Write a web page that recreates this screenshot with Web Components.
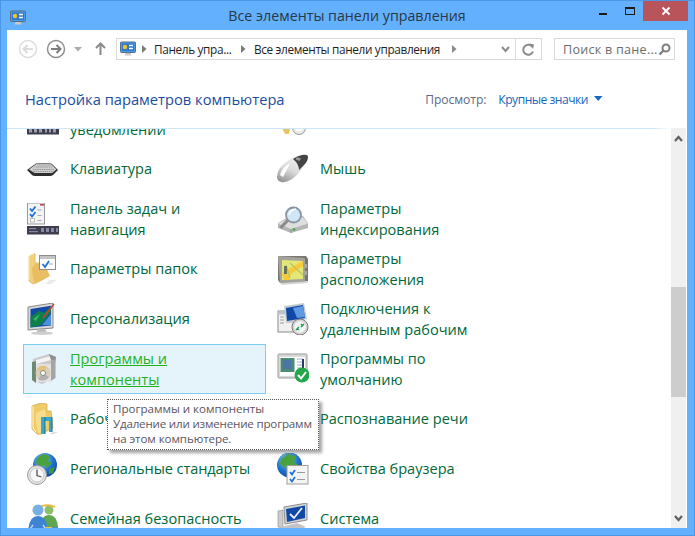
<!DOCTYPE html>
<html lang="ru"><head><meta charset="utf-8"><title>Все элементы панели управления</title>
<style>
html,body{margin:0;height:100%;overflow:hidden;background:#63b0fe}
body{font-family:"Open Sans","Noto Sans","Liberation Sans",sans-serif}
</style></head><body>
<cp-window>
  <cp-navbar slot="nav"></cp-navbar>
  <cp-header slot="head"></cp-header>
  <cp-list slot="list">
    <cp-item icon="strip"><span>&nbsp;<br>уведомлений</span></cp-item>
    <cp-item icon="key"></cp-item>
    <cp-item icon="keyboard">Клавиатура</cp-item>
    <cp-item icon="mouse">Мышь</cp-item>
    <cp-item icon="taskbar">Панель задач и<br>навигация</cp-item>
    <cp-item icon="index">Параметры<br>индексирования</cp-item>
    <cp-item icon="folderopt">Параметры папок</cp-item>
    <cp-item icon="gps">Параметры<br>расположения</cp-item>
    <cp-item icon="monitor">Персонализация</cp-item>
    <cp-item icon="rdp">Подключения к<br>удаленным рабочим</cp-item>
    <cp-item icon="programs" hot>Программы и<br>компоненты</cp-item>
    <cp-item icon="defaults">Программы по<br>умолчанию</cp-item>
    <cp-item icon="workfolder">Рабочие папки</cp-item>
    <cp-item>Распознавание речи</cp-item>
    <cp-item icon="region"><span style="letter-spacing:-.09px">Региональные стандарты</span></cp-item>
    <cp-item icon="browser">Свойства браузера</cp-item>
    <cp-item icon="family">Семейная безопасность</cp-item>
    <cp-item icon="system">Система</cp-item>
  </cp-list>
  <cp-tooltip slot="tip"><span style="letter-spacing:-.02px">Программы и компоненты</span><br><span style="letter-spacing:-.2px">Удаление или изменение программ</span><br>на этом компьютере.</cp-tooltip>
</cp-window>
<script>
const GLOBE=`<radialGradient id="g" cx=".4" cy=".3" r=".8"><stop offset="0" stop-color="#8fd0f5"/><stop offset=".55" stop-color="#1f72cf"/><stop offset="1" stop-color="#103f98"/></radialGradient>`;
const ICONS={
strip:`<rect x="0" y="24" width="32" height="7.500" fill="#3d3d4b"/><path d="M2 25.500h3v4H2zM7 25.500h3v4H7zM12 25.500h3v4h-3zM18 25.500h2v4h-2zM22 25.500h2v4h-2zM26 25.500h3v4h-3z" fill="#9c9cae"/>`,
key:`<path d="M5 25h8l-1 6H8z" fill="#e6c563"/><circle cx="22" cy="25" r="6.500" fill="#e8e8e8" stroke="#9a9a9a"/><circle cx="22" cy="25" r="3.500" fill="#fff"/>`,
keyboard:`<path d="M0 17 9 10.500Q10 10 12 10H22Q24 10 25 11L31 17 26 22Q25 23 23 23H8Q6 23 5 22Z" fill="#2f2f2f"/><path d="M2 16.500 10 10.600H23.500L29.500 16.500 25 20H7.500Z" fill="#cdcdcd"/><path d="M6 16.500H27M8.500 14H25M6.500 18.500H26M10 12H24" stroke="#8d8d8d" stroke-width=".8" stroke-dasharray="1.500 .7" fill="none"/>`,
taskbar:`<rect x="0.500" y="0" width="17" height="21" fill="#f4f4f4" stroke="#9a9a9a"/><rect x="13" y="1" width="4" height="1.600" fill="#c2455a"/><path d="M3 5.500 5 8 8.500 3.500M3 11 5 13.500 8.500 9" stroke="#1d72d8" stroke-width="1.800" fill="none"/><rect x="3.500" y="15.500" width="4" height="3.500" fill="#fff" stroke="#aaa" stroke-width=".7"/><path d="M10.500 7h4M10.500 12.500h4M10.500 17.500h4" stroke="#aaa"/><rect x="0" y="23" width="32" height="8.500" fill="#3d3d4b"/><path d="M2 25h7v1.300H2zM2 28h9v1.300H2zM14 25h3v4h-3zM19 25h3v4h-3zM24 25h3v4h-3zM29 25h2v4h-2z" fill="#8788a5"/>`,
folderopt:`<path d="M2 3 8 0V10H14L17 26 6 31 2 28Z" fill="#f2d27e" stroke="#c9a652" stroke-width=".6"/><path d="M8 11H18Q21 19 23 23L8 31Q5 22 5 15Z" fill="#e9be62"/><path d="M8 0 2 3V27" fill="none" stroke="#fff3c6"/><rect x="12.500" y="2.500" width="16" height="14" fill="#fff" stroke="#8e8e8e"/><rect x="13" y="3" width="15" height="3" fill="#c4c4c4"/><path d="M15.500 11 18 14 22 8" stroke="#1d72d8" stroke-width="1.800" fill="none"/><path d="M22 11h4" stroke="#aaa"/><path d="M22 27H30L24 31H18Z" fill="#ddd" opacity=".6"/>`,
monitor:`<path d="M1 4 26 0V25L1 27Z" fill="#d8d8d8" stroke="#8a8a8a"/><path d="M3.500 6 24 2.800V22.500L3.500 24.500Z" fill="#124aa8"/><path d="M3.500 24.500 3.500 14 12 8 17 10 24 3V9L14 22Z" fill="#0e7f47"/><path d="M6 16 13 11 9 18Z" fill="#3bb46c"/><path d="M15 22 24 11V22.500Z" fill="#4f8fdc"/><path d="M16 15 27 1" stroke="#d33a3a" stroke-width="1.400"/><path d="M11 26H18L20 30H9Z" fill="#bbb"/><ellipse cx="15" cy="30.300" rx="11" ry="1.700" fill="#cfcfcf"/>`,
programs:`<path d="M6 6 22 1 29 4V25L15 31 5 27Z" fill="#c9c9c9"/><path d="M9 7 24 3 24 7 9 11Z" fill="#f4f4f4"/><path d="M22 1 29 4 28 10 24 7Z" fill="#8f8f8f"/><path d="M5 9 9 8V30L5 27Z" fill="#6d8a76"/><rect x="9" y="11" width="15" height="18" fill="#e2e2e2"/><circle cx="16" cy="20" r="7.500" fill="#d6cfb8"/><path d="M16 20 10 16A7.500 7.500 0 0 1 20 14Z" fill="#e4c27e"/><path d="M16 20 22 24A7.500 7.500 0 0 1 11 26Z" fill="#b0b0b0"/><circle cx="16" cy="20" r="2.500" fill="#fff" stroke="#888"/><path d="M24 8 28 6V25L24 28Z" fill="#a5a5a5"/>`,
workfolder:`<path d="M5 3 14 0 20 1V8H24L26 25 12 32 9 30 5 26Z" fill="#efca68" stroke="#c49a3a" stroke-width=".6"/><path d="M9 10 18 6 20 22 12 32Q8 20 9 10Z" fill="#f6dc8c"/><path d="M6 3V25L9 29" fill="none" stroke="#fff1bf" stroke-width="1.200"/><path d="M14 14H25V29H22V18H18V31H14Z" fill="#3aa6c9"/><path d="M18 14V31M25 14V29" stroke="#1f6f8e"/><path d="M26 29h5l-4 2h-5z" fill="#ddd"/>`,
region:`<defs>${GLOBE}</defs><circle cx="18" cy="12" r="12" fill="url(#g)"/><path d="M10 5 16 1 23 3 21 8 25 10 20 15 17 12 14 14 9 10Z" fill="#49a23d"/><path d="M22 16 28 14 26 20 22 21Z" fill="#3d9a3a"/><circle cx="10" cy="22" r="9.500" fill="#e6e6e6" stroke="#9a9a9a"/><circle cx="10" cy="22" r="7" fill="#f8f8f8" stroke="#c4c4c4"/><path d="M10 16.500V22.500L14.500 24" stroke="#555" stroke-width="1.300" fill="none"/>`,
family:`<circle cx="22" cy="7" r="4.500" fill="#8cc06a"/><path d="M14 24Q14 12 22 12T31 24Z" fill="#5ea64f"/><path d="M6 9A18 18 0 0 1 28 4" stroke="#f2b63b" stroke-width="1.600" fill="none"/><circle cx="11" cy="7" r="5.500" fill="#79b0e3"/><path d="M1 32Q1 13 11 13T21 32Z" fill="#3d84d2"/><path d="M6 22 1 29M16 22 21 29" stroke="#b9d6f2" stroke-width="1.500"/><rect x="19" y="24" width="12" height="8" fill="#4d8bd1"/><path d="M19 24H25V32H19Z" fill="#f0c63c"/><path d="M25 28H31V32H25Z" fill="#4aa34a"/>`,
mouse:`<defs><linearGradient id="m" x1=".7" y1="0" x2=".2" y2="1"><stop offset="0" stop-color="#f4f4f4"/><stop offset=".55" stop-color="#dcdcdc"/><stop offset="1" stop-color="#959595"/></linearGradient></defs><path d="M0 24Q0 16 8 10 15 4 22 2 29 0 31 3 32 7 27 13 21 22 15 26 8 30 4 29 0 28 0 24Z" fill="url(#m)"/><path d="M16 6Q20 3 25 2 31 1 31 4 31 8 27 12L22 17Q22 11 16 6Z" fill="#444"/><path d="M20 4 24 5.500 22.500 8 18.500 6.500Z" fill="#969696"/><path d="M3 22Q5 15 13 10 10 17 6 24Z" fill="#fff"/>`,
index:`<path d="M1 20 13 13H26L31 20V25L14 30 1 25Z" fill="#b6b6b6"/><path d="M1 20.500 14 26 31 20.500 26 14.500H13Z" fill="#dedede"/><path d="M14 26V30" stroke="#8f8f8f"/><circle cx="17" cy="26.500" r="1.400" fill="#3fb24a"/><circle cx="16.500" cy="12" r="7.500" fill="#cfe6f7" stroke="#8793a0" stroke-width="1.800"/><path d="M12 12Q13 7 19 6" stroke="#fff" stroke-width="1.500" fill="none"/><path d="M11 17 3.500 25" stroke="#8b8b8b" stroke-width="3.200"/>`,
gps:`<path d="M1 3 29 3 31 6 31 28 3 30 1 27Z" fill="#77776f"/><path d="M1 3 28 5V29L3 30Z" fill="#a3a39b"/><path d="M5 7 26 8V26L5 27Z" fill="#e2e778"/><path d="M5 20 15 14 26 8V13L14 21 12 27H7Z" fill="#f8ca38"/><path d="M9 12 13 25M13 10 26 22" stroke="#bcc168" stroke-width="1.200"/><rect x="7" y="13" width="3" height="8" fill="#68725a"/><path d="M29 11v4M29 18v4" stroke="#ddd"/><path d="M3 30 31 28V30L5 32Z" fill="#c6c6c6" opacity=".7"/>`,
rdp:`<rect x="1" y="8" width="16" height="21" fill="#f0f0f0" stroke="#8c8c8c"/><rect x="1.500" y="8.500" width="15" height="3" fill="#bfc3c8"/><path d="M3 14h4M3 17h4M3 20h4" stroke="#9aa0a6"/><path d="M7 3 27 0 30 16 18 20 9 20Z" fill="#c3cbd2"/><path d="M9 5 26 2 28 15 10 18Z" fill="#1048a8"/><path d="M16 5 26 3 28 14 20 15Z" fill="#5d9ade"/><circle cx="23" cy="24" r="8" fill="#d5d5d5" stroke="#7a7a7a"/><circle cx="23" cy="24" r="5.800" fill="#f4f4f4"/><path d="M20 25 22 27M19 27l3-3M26 23 24 21M27 21l-3 3" stroke="#1b9c57" stroke-width="1.500" fill="none"/>`,
defaults:`<rect x="1" y="1" width="29" height="24" rx="1" fill="#d9d9d9" stroke="#9c9c9c"/><rect x="3" y="4" width="25" height="19" fill="#fff"/><rect x="3.500" y="5" width="14" height="14" fill="#4b8a73"/><rect x="6" y="7" width="8" height="9" fill="#4d74a8"/><path d="M20 6h6M20 9h6M20 12h6M20 15h6" stroke="#9eb0c0"/><rect x="25" y="6" width="2" height="9" fill="#27396e"/><circle cx="25" cy="22" r="7.500" fill="#22a84a"/><path d="M21 22 24 25.500 29 19" stroke="#fff" stroke-width="2" fill="none"/>`,
browser:`<defs>${GLOBE}</defs><circle cx="12.500" cy="12" r="12.500" fill="url(#g)"/><path d="M4 6 11 1 19 3 17 9 21 12 15 17 11 13 8 15 3 11Z" fill="#49a23d"/><rect x="10" y="12.500" width="21" height="18.500" fill="#f4f4f4" stroke="#9d9d9d"/><path d="M13 19 15 21.500 18 17M13 26 15 28.500 18 24" stroke="#1d72d8" stroke-width="1.800" fill="none"/><path d="M20 19.500h8M20 26.500h8" stroke="#9a9a9a" stroke-width="1.200"/>`,
system:`<path d="M7 4 30 0V17L8 21Z" fill="#d4d4d4" stroke="#8c8c8c"/><path d="M9 6 28 2.500V15L10 19Z" fill="#1048a8"/><path d="M13 11 17 15 25 5" stroke="#eef" stroke-width="1.800" fill="none"/><path d="M1 8 6 7V25L1 24Z" fill="#ccc" stroke="#888" stroke-width=".6"/><path d="M3 24 20 20 29 24 12 30Z" fill="#c4c4c4"/>`
};
function def(name,html,cb){customElements.define(name,class extends HTMLElement{
  constructor(){super();this.attachShadow({mode:'open'}).innerHTML=html;}
  connectedCallback(){cb&&cb.call(this);}
});}
def('cp-icon',`<style>:host{display:block;width:32px;height:32px;flex:none}svg{display:block;width:32px;height:32px;overflow:hidden}</style><svg viewBox="0 0 32 32"></svg>`,function(){
  this.shadowRoot.querySelector('svg').innerHTML=ICONS[this.getAttribute('name')]||'';
});
const APP=`<svg width="16" height="16" viewBox="0 0 16 16"><rect x=".5" y="1" width="15" height="10.500" rx="1" fill="#4a9be6" stroke="#5a6d85"/><rect x="2" y="2.500" width="12" height="7.500" fill="#2f78d0"/><circle cx="5" cy="6" r="2.200" fill="#f2c230"/><path d="M9 4.500h4M9 7.500h4" stroke="#fff" stroke-width="1.400"/><path d="M5.500 12h5l1 2.500h-7z" fill="#c9c9c9"/></svg>`;
def('cp-window',`<style>
:host{display:flex;flex-direction:column;width:695px;height:536px;box-sizing:border-box;background:#63b0fe;box-shadow:inset 0 0 0 1px #4a97e6;position:relative;overflow:hidden}
.title{height:30px;flex:none;display:flex;align-items:flex-start;position:relative}
.app{margin:9px 0 0 10px;height:16px}
.t{position:absolute;left:0;right:0;text-align:center;top:6px;font-size:14.25px;line-height:20px;color:#2a3744;padding-right:1px}
.btns{margin-left:auto;display:flex;align-items:flex-start;padding:1px 7px 0 0;position:relative}
.b{width:26px;height:20px;display:flex;align-items:center;justify-content:center}
.x{width:45px;background:#b9545b}
.body{flex:1;margin:0 8px 8px 7px;background:#fff;display:flex;flex-direction:column;min-height:0;position:relative}
.main{flex:1;display:flex;min-height:0;position:relative}
</style>
<div class="title">
  <div class="app">${APP}</div>
  <div class="t">Все элементы панели управления</div>
  <div class="btns">
    <div class="b"><svg width="10" height="10"><rect x="0" y="7" width="8" height="2" fill="#1b1b1b"/></svg></div>
    <div class="b"><svg width="12" height="10"><rect x="1.500" y="1.500" width="9" height="7" fill="none" stroke="#1b1b1b" stroke-width="1"/><rect x="1" y="1" width="10" height="2" fill="#1b1b1b"/></svg></div>
    <div class="b x"><svg width="10" height="10"><path d="M1.500 1.500l7 7M8.500 1.500l-7 7" stroke="#fff" stroke-width="1.800"/></svg></div>
  </div>
</div>
<div class="body">
  <slot name="nav"></slot><slot name="head"></slot>
  <div class="main"><slot name="list"></slot><cp-scrollbar></cp-scrollbar><slot name="tip"></slot></div>
</div>`);
def('cp-navbar',`<style>
:host{display:flex;align-items:center;height:22px;padding:8px 12px 0 11px;font-size:11.8px;color:#1e1e1e;flex:none}
svg{display:block;flex:none}
.nav{display:flex;align-items:center;width:98px;flex:none}
.addr{width:426px;height:22px;box-sizing:border-box;border:1px solid #d9d9d9;display:flex;align-items:center;flex:none;letter-spacing:-.35px}
.addr span{white-space:nowrap}
.ref{margin-left:0;width:25px;height:20px;border-left:1px solid #d9d9d9;display:flex;align-items:center;justify-content:center}
.search{margin-left:12px;width:121px;height:22px;box-sizing:border-box;border:1px solid #d9d9d9;display:flex;align-items:center;padding:0 7px 0 8px;color:#6d6d6d;justify-content:space-between;font-size:12.6px;letter-spacing:.25px;white-space:nowrap}
</style>
<div class="nav">
  <svg width="20" height="20" viewBox="0 0 20 20"><circle cx="10" cy="10" r="8.500" fill="none" stroke="#dcdcdc" stroke-width="1.500"/><path d="M15 10H6M9.500 6 5.500 10l4 4" stroke="#dcdcdc" stroke-width="2" fill="none"/></svg>
  <svg style="margin-left:8px" width="20" height="20" viewBox="0 0 20 20"><circle cx="10" cy="10" r="8.500" fill="none" stroke="#8f8f8f" stroke-width="1.500"/><path d="M5 10h9M10.500 6l4 4-4 4" stroke="#7d7d7d" stroke-width="2" fill="none"/></svg>
  <svg style="margin-left:8px" width="8" height="5"><path d="M0 0h8L4 4.500z" fill="#ababab"/></svg>
  <svg style="margin-left:13px" width="11" height="14" viewBox="0 0 11 14"><path d="M5.500 13V2M1 6l4.500-4.500L10 6" stroke="#8a8a8a" stroke-width="2" fill="none"/></svg>
</div>
<div class="addr">
  <div style="margin-left:3px">${APP}</div>
  <svg style="margin-left:6px" width="5" height="8"><path d="M0 0l4.500 4L0 8z" fill="#7a7a7a"/></svg>
  <span style="margin-left:7px;width:79px">Панель упра...</span>
  <svg style="margin-left:8px" width="5" height="8"><path d="M0 0l4.500 4L0 8z" fill="#7a7a7a"/></svg>
  <span style="margin-left:8px;width:187px">Все элементы панели управления</span>
  <svg style="margin-left:11px" width="5" height="8"><path d="M0 0l4.500 4L0 8z" fill="#8a8a8a"/></svg>
  <svg style="margin-left:auto;margin-right:5px" width="9" height="7"><path d="M1 1l3.500 4L8 1" stroke="#8a8a8a" stroke-width="2" fill="none"/></svg>
  <div class="ref"><svg width="13" height="13" viewBox="0 0 13 13"><path d="M10.500 4A5 5 0 1 0 11 8.500" fill="none" stroke="#8a8a8a" stroke-width="2"/><path d="M7.500 .5 12 1.500 11 6z" fill="#8a8a8a"/></svg></div>
</div>
<div class="search"><span>Поиск в пане...</span><svg width="13" height="13" viewBox="0 0 13 13"><circle cx="8" cy="5" r="3.500" fill="none" stroke="#7f7f7f" stroke-width="2"/><path d="M5.500 7.500 1.500 11.500" stroke="#7f7f7f" stroke-width="2.400"/></svg></div>`);
def('cp-header',`<style>
:host{display:flex;align-items:center;height:68px;flex:none;padding:10px 0 0 18px;box-sizing:border-box;font-size:14.7px;color:#1a4ea0;white-space:nowrap}
.view{margin-left:auto;display:flex;align-items:center;font-size:12.1px;padding-right:84px}
.lbl{color:#5b6a88;letter-spacing:-.08px}
.val{color:#1868c0;margin-left:12px;letter-spacing:-.5px}
svg{margin-left:6px}
</style>
<span>Настройка параметров компьютера</span>
<div class="view"><span class="lbl">Просмотр:</span><span class="val">Крупные значки</span><svg width="9" height="6"><path d="M0 0h8.500L4.200 5z" fill="#1868c0"/></svg></div>`);
def('cp-list',`<style>
:host{display:block;flex:1;min-width:0;height:400px;overflow:hidden;border-top:1px solid transparent;box-sizing:border-box;position:relative;border-image:linear-gradient(90deg,#cde6f8 97%,#fff) 1}
.grid{display:grid;grid-template-columns:250px 250px;grid-auto-rows:50px;margin:-35px 0 0 16px}
</style><div class="grid"><slot></slot></div>`);
def('cp-item',`<style>
:host{display:flex;align-items:center;width:243px;height:50px;box-sizing:border-box;border:1px solid transparent;padding-left:3px;gap:11px;font-size:14.55px;line-height:21px;color:#00693a;white-space:nowrap}
:host([hot]){background:#e5f3fb;border-color:#7dcdf5;color:#1fb41f}
:host([hot]) .t{text-decoration:underline}
.i{width:32px;height:32px;flex:none}
.t{margin-bottom:1px}
</style><div class="i"></div><div class="t"><slot></slot></div>`,function(){
  const n=this.getAttribute('icon');
  if(n){const i=document.createElement('cp-icon');i.setAttribute('name',n);this.shadowRoot.querySelector('.i').append(i);}
});
def('cp-scrollbar',`<style>
:host{display:flex;flex-direction:column;width:15px;flex:none;margin-right:1px;background:#f0f0f0;height:400px}
.a{height:20px;display:flex;align-items:center;justify-content:center;flex:none}
.up{height:159px;flex:none}
.th{height:110px;flex:none;background:#cdcdcd}
.sp{flex:1}
</style>
<div class="up"><div class="a"><svg width="9" height="7"><path d="M1 6l3.500-4L8 6" stroke="#606060" stroke-width="2.200" fill="none"/></svg></div></div>
<div class="th"></div><div class="sp"></div>
<div class="a"><svg width="9" height="7"><path d="M1 1l3.500 4L8 1" stroke="#606060" stroke-width="2.200" fill="none"/></svg></div>`);
def('cp-tooltip',`<style>
:host{position:absolute;left:100px;top:271px;width:212px;height:51px;box-sizing:border-box;background:#fff;border:1px dotted #555;box-shadow:3px 3px 3px rgba(90,90,90,.55);font-size:11.6px;letter-spacing:-.1px;line-height:15px;color:#5d5560;padding:1px 5px;white-space:nowrap}
</style><slot></slot>`);
</script>
</body></html>
